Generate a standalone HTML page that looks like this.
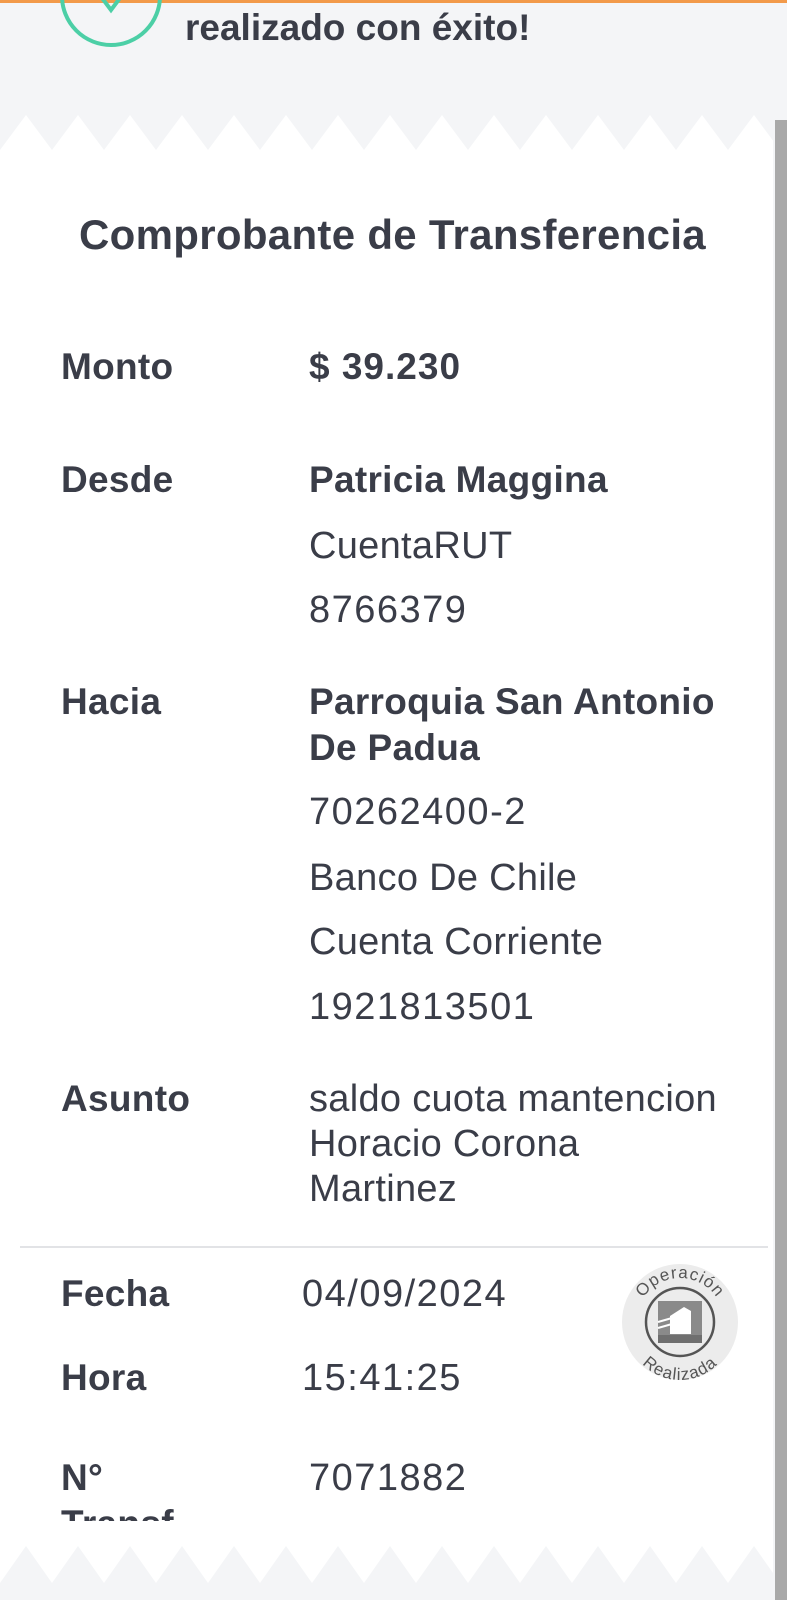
<!DOCTYPE html>
<html><head><meta charset="utf-8">
<style>
html,body{margin:0;padding:0}
body{width:787px;height:1600px;position:relative;overflow:hidden;background:#f4f5f7;font-family:"Liberation Sans",sans-serif;color:#3a3d48}
.card{position:absolute;left:0;top:150px;width:773px;height:1396px;background:#fff}
.t{position:absolute;white-space:nowrap;line-height:44px;height:44px;font-size:38px;letter-spacing:0.3px}
.b{font-weight:bold;font-size:37px}
.n{letter-spacing:1.5px}
.clip{position:absolute;left:0;top:150px;width:773px;height:1371px;overflow:hidden}
</style></head><body>
<div style="position:absolute;left:0;top:0;width:787px;height:3px;background:#f29a4a"></div>
<svg style="position:absolute;left:0;top:0" width="200" height="60"><circle cx="111" cy="-4" r="49" fill="none" stroke="#4ccfa6" stroke-width="4"/><path d="M102 -2 L111 10 L120 -2" fill="none" stroke="#4ccfa6" stroke-width="4"/></svg>
<div class="t b" style="left:185px;top:6px;font-size:37px;letter-spacing:0">realizado con éxito!</div>
<svg style="position:absolute;left:0;top:114px" width="773" height="37"><path d="M0 36 L26 1 L52 36 L78 1 L104 36 L130 1 L156 36 L182 1 L208 36 L234 1 L260 36 L286 1 L312 36 L338 1 L364 36 L390 1 L416 36 L442 1 L468 36 L494 1 L520 36 L546 1 L572 36 L598 1 L624 36 L650 1 L676 36 L702 1 L728 36 L754 1 L780 36 L780 37 L0 37Z" fill="#fff"/></svg>
<div class="card"></div>
<svg style="position:absolute;left:0;top:1545px" width="773" height="40"><path d="M0 0 L0 38 L26 1 L52 38 L78 1 L104 38 L130 1 L156 38 L182 1 L208 38 L234 1 L260 38 L286 1 L312 38 L338 1 L364 38 L390 1 L416 38 L442 1 L468 38 L494 1 L520 38 L546 1 L572 38 L598 1 L624 38 L650 1 L676 38 L702 1 L728 38 L754 1 L780 38 L780 0Z" fill="#fff"/></svg>
<div style="position:absolute;left:775px;top:120px;width:12px;height:1480px;background:#a9a9a9"></div>
<div class="clip">
<div class="t b" style="left:0;width:785px;text-align:center;top:63px;font-size:42px;letter-spacing:0.3px">Comprobante de Transferencia</div>
<div class="t b" style="left:61px;top:195px">Monto</div>
<div class="t b" style="left:309px;top:195px;letter-spacing:1px">$ 39.230</div>
<div class="t b" style="left:61px;top:308px">Desde</div>
<div class="t b" style="left:309px;top:308px">Patricia Maggina</div>
<div class="t" style="left:309px;top:374px">CuentaRUT</div>
<div class="t n" style="left:309px;top:438px">8766379</div>
<div class="t b" style="left:61px;top:530px">Hacia</div>
<div class="t b" style="left:309px;top:530px">Parroquia San Antonio</div>
<div class="t b" style="left:309px;top:576px">De Padua</div>
<div class="t n" style="left:309px;top:640px">70262400-2</div>
<div class="t" style="left:309px;top:706px">Banco De Chile</div>
<div class="t" style="left:309px;top:770px">Cuenta Corriente</div>
<div class="t n" style="left:309px;top:835px">1921813501</div>
<div class="t b" style="left:61px;top:927px">Asunto</div>
<div class="t" style="left:309px;top:927px">saldo cuota mantencion</div>
<div class="t" style="left:309px;top:972px">Horacio Corona</div>
<div class="t" style="left:309px;top:1017px">Martinez</div>
<div style="position:absolute;left:20px;top:1096px;width:748px;height:2px;background:#e2e3e6"></div>
<div class="t b" style="left:61px;top:1122px">Fecha</div>
<div class="t n" style="left:302px;top:1122px">04/09/2024</div>
<div class="t b" style="left:61px;top:1206px">Hora</div>
<div class="t n" style="left:302px;top:1206px">15:41:25</div>
<div class="t b" style="left:61px;top:1306px">N°</div>
<div class="t n" style="left:309px;top:1306px">7071882</div>
<div class="t b" style="left:61px;top:1352px">Transf</div>
</div>
<svg style="position:absolute;left:620px;top:1262px" width="120" height="120" viewBox="0 0 120 120">
<circle cx="60" cy="60" r="58" fill="#ececec"/>
<circle cx="60" cy="60" r="34" fill="none" stroke="#555" stroke-width="2.5"/>
<rect x="38" y="39" width="44" height="42" fill="#8a8a8a"/>
<path d="M50 72 L50 54 L64 45 L71 49 L71 72Z" fill="#fff"/>
<path d="M38 60 L52 56 M38 66 L52 62" stroke="#fff" stroke-width="2"/>
<rect x="38" y="73" width="44" height="8" fill="#6f6f6f"/>
<defs><path id="a1" d="M16 60 A44 44 0 0 1 104 60"/><path id="a2" d="M8 66 A52 52 0 0 0 112 66"/></defs>
<text font-family="Liberation Sans,sans-serif" font-size="17" fill="#555" letter-spacing="1"><textPath href="#a1" startOffset="50%" text-anchor="middle">Operación</textPath></text>
<text font-family="Liberation Sans,sans-serif" font-size="17" fill="#555" letter-spacing="1"><textPath href="#a2" startOffset="50%" text-anchor="middle">Realizada</textPath></text>
</svg>
</body></html>
